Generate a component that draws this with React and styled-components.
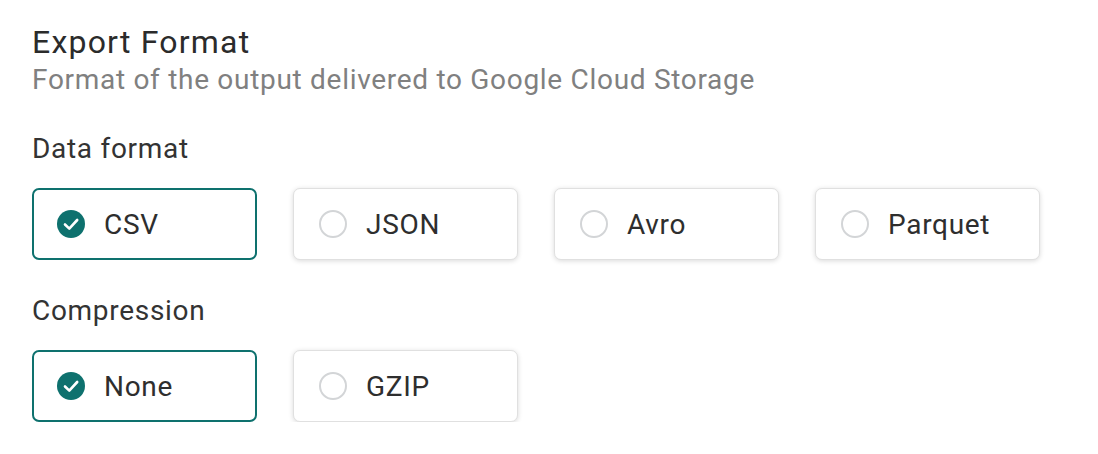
import React, { useState } from "react";
import styled, { createGlobalStyle } from "styled-components";

const Global = createGlobalStyle`
  html, body { margin: 0; padding: 0; background: #ffffff; }
  body { font-family: Roboto, "Noto Sans", sans-serif; -webkit-font-smoothing: antialiased; }
`;

const Page = styled.div`
  padding: 22px 32px 0 32px;
  display: flex;
  flex-direction: column;
`;

const Title = styled.h1`
  margin: 0;
  font-size: 32px;
  line-height: 40px;
  font-weight: 400;
  color: #2b2b2b;
  letter-spacing: 1.2px;
`;

const Subtitle = styled.p`
  margin: 0;
  font-size: 28px;
  line-height: 36px;
  font-weight: 400;
  color: #808080;
  letter-spacing: 0.7px;
`;

const Section = styled.div`
  display: flex;
  flex-direction: column;
  margin-top: ${(p) => p.$top}px;
`;

const Label = styled.div`
  font-size: 28px;
  line-height: 34px;
  color: #333333;
  letter-spacing: 0.7px;
`;

const Options = styled.div`
  display: flex;
  gap: 36px;
  margin-top: 22px;
`;

const Card = styled.button`
  box-sizing: border-box;
  width: 225px;
  height: 72px;
  display: flex;
  align-items: center;
  gap: 19px;
  background: #ffffff;
  border-radius: 7px;
  cursor: pointer;
  font-family: inherit;
  font-size: 28px;
  color: #2e2e2e;
  letter-spacing: 0.7px;
  border: ${(p) => (p.$selected ? "2px solid #0e716e" : "1px solid #e0e0e0")};
  box-shadow: ${(p) => (p.$selected ? "none" : "0 1px 5px rgba(0,0,0,0.15)")};
  padding: 0 0 0 ${(p) => (p.$selected ? 23 : 25)}px;
`;

const Radio = styled.span`
  box-sizing: border-box;
  width: 28px;
  height: 28px;
  border-radius: 50%;
  border: 2px solid #d3d5d7;
  flex: none;
`;

const Check = () => (
  <svg width="28" height="28" viewBox="0 0 28 28" style={{ flex: "none" }}>
    <circle cx="14" cy="14" r="14" fill="#0e716e" />
    <path d="M8 14.5 L12.3 18.6 L20.2 10" fill="none" stroke="#fff" strokeWidth="2.6" strokeLinecap="round" strokeLinejoin="round" />
  </svg>
);

function Group({ label, options, top }) {
  const [value, setValue] = useState(options[0]);
  return (
    <Section $top={top}>
      <Label>{label}</Label>
      <Options>
        {options.map((o) => (
          <Card key={o} $selected={o === value} onClick={() => setValue(o)}>
            {o === value ? <Check /> : <Radio />}
            {o}
          </Card>
        ))}
      </Options>
    </Section>
  );
}

export default function App() {
  return (
    <>
      <Global />
      <Page>
        <Title>Export Format</Title>
        <Subtitle>Format of the output delivered to Google Cloud Storage</Subtitle>
        <Group top={34} label="Data format" options={["CSV", "JSON", "Avro", "Parquet"]} />
        <Group top={34} label="Compression" options={["None", "GZIP"]} />
      </Page>
    </>
  );
}
